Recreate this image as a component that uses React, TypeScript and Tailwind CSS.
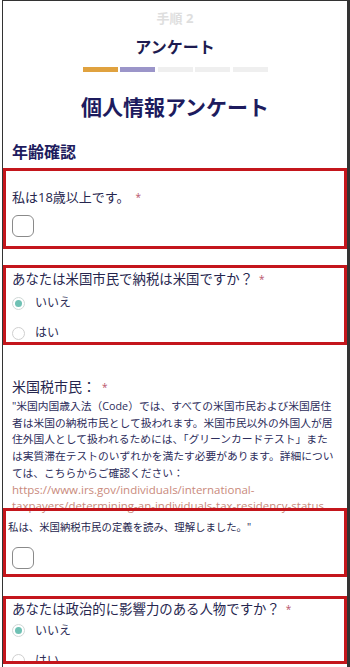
const jp = { fontFamily: '"Open Sans", "Noto Sans CJK JP", sans-serif' };

function Star() {
  return <span className="ml-[6px] text-[10px] text-[#b8536a] align-top">*</span>;
}

function Checkbox() {
  return <div className="h-[22px] w-[22px] rounded-[6px] border-[1.5px] border-[#8a8a8a] bg-white" />;
}

function Radio({ label, checked }: { label: string; checked?: boolean }) {
  return (
    <div className="flex h-[18px] items-center gap-[10px]">
      <div
        className={
          checked
            ? "flex h-[13px] w-[13px] items-center justify-center rounded-full border border-[#cfd8d6] bg-white"
            : "h-[13px] w-[13px] rounded-full border border-[#cfcfcf] bg-white"
        }
      >
        {checked && <div className="h-[7px] w-[7px] rounded-full bg-[#6fc1b4]" />}
      </div>
      <span className="text-[12px] leading-[16px] text-[#2b2b55]">{label}</span>
    </div>
  );
}

function RadioBox({ question, clip }: { question: string; clip?: boolean }) {
  return (
    <div
      className={
        "border-[3px] border-[#c4161c] px-[6px] " +
        (clip ? "h-[68px] overflow-hidden pt-0" : "pt-[1px] pb-0")
      }
    >
      <p className="text-[13.4px] leading-[20px] text-[#26264e]">
        {question}
        <Star />
      </p>
      <div className={(clip ? "mt-[3px]" : "mt-[5px]") + " flex flex-col gap-[12px]"}>
        <Radio label="いいえ" checked />
        <Radio label="はい" />
      </div>
    </div>
  );
}

const steps = ["bg-[#e0a23f]", "bg-[#9b95c9]", "bg-[#efefef]", "bg-[#efefef]", "bg-[#efefef]"];

export default function App() {
  return (
    <div className="h-[667px] w-[350px] overflow-hidden bg-white pl-[2px]" style={jp}>
      <div className="h-full border-l-[1.5px] border-r-[3px] border-t border-[#333]">
        <div className="flex flex-col items-center pt-[8px]">
          <p className="text-[13px] font-bold leading-[18px] text-[#dedede]">手順 2</p>
          <h2 className="mt-[9px] text-[16px] font-bold leading-[22px] text-[#1d1b50]">アンケート</h2>
          <div className="mt-[9px] flex gap-[2.5px]">
            {steps.map((c, i) => (
              <div key={i} className={"h-[5px] w-[35px] " + c} />
            ))}
          </div>
          <h1 className="mt-[20px] text-[21px] font-bold leading-[30px] text-[#1d1b5e]">個人情報アンケート</h1>
        </div>

        <h3 className="mt-[19px] px-[9px] text-[16px] font-bold leading-[22px] text-[#1d1b5e]">年齢確認</h3>

        <div className="mt-[5px] border-[3px] border-[#c4161c] px-[6px] pt-[17px] pb-[9px]">
          <p className="text-[13px] leading-[18px] text-[#26264e]">
            私は18歳以上です。
            <Star />
          </p>
          <div className="mt-[9px]">
            <Checkbox />
          </div>
        </div>

        <div className="mt-[16px]">
          <RadioBox question="あなたは米国市民で納税は米国ですか？" />
        </div>

        <div className="mt-[32px] px-[9px]">
          <p className="text-[14px] leading-[20px] text-[#26264e]">
            米国税市民：
            <Star />
          </p>
          <p className="mt-[1px] text-[10.75px] leading-[16.7px] text-[#2d2d5c]">
            "米国内国歳入法（Code）では、すべての米国市民および米国居住者は米国の納税市民として扱われます。米国市民以外の外国人が居住外国人として扱われるためには、「グリーンカードテスト」または実質滞在テストのいずれかを満たす必要があります。詳細については、こちらからご確認ください：
          </p>
          <p className="text-[11.5px] leading-[16.7px] text-[#c98a7c]">
            https://www.irs.gov/individuals/international-
            <br />
            taxpayers/determining-an-individuals-tax-residency-status
          </p>
        </div>

        <div className="relative -mt-[7px] border-[3px] border-[#c4161c] pl-[2px] pr-[6px] pt-[8px] pb-[5px]">
          <p className="text-[10.4px] leading-[16px] text-[#26264e]">
            私は、米国納税市民の定義を読み、理解しました。"
          </p>
          <div className="mt-[12px] pl-[4px]">
            <Checkbox />
          </div>
        </div>

        <div className="mt-[19px]">
          <RadioBox question="あなたは政治的に影響力のある人物ですか？" clip />
        </div>
      </div>
    </div>
  );
}
